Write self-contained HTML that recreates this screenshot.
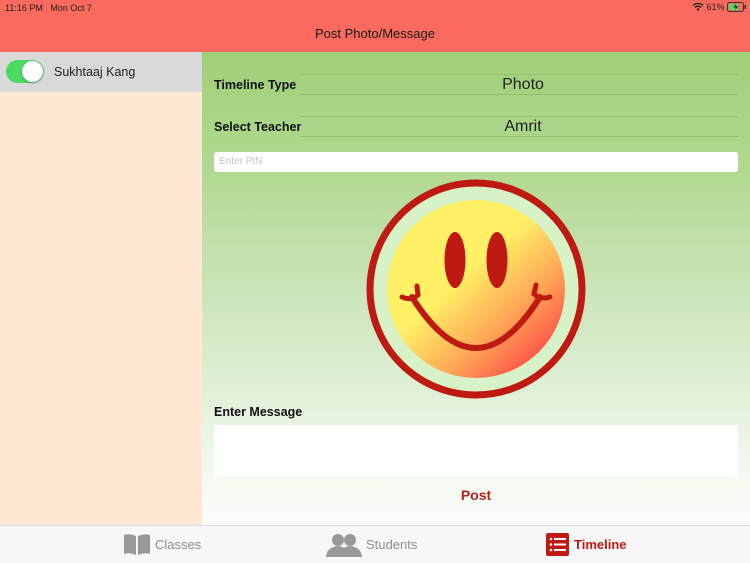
<!DOCTYPE html>
<html><head><meta charset="utf-8"><style>
*{margin:0;padding:0;box-sizing:border-box}
body{width:750px;height:563px;overflow:hidden;font-family:"Liberation Sans",sans-serif;position:relative;background:#fff}
.hdr{position:absolute;left:0;top:0;width:750px;height:52px;background:#fb6a5e}
.st{position:absolute;top:3px;font-size:9px;color:#222}
.title{position:absolute;top:26px;width:100%;text-align:center;font-size:13px;color:#1a1a1a}
.side{position:absolute;left:0;top:52px;width:202px;height:473px;background:#fee8d3}
.row{position:absolute;left:0;top:0;width:202px;height:40px;background:#d9d9d9}
.tog{position:absolute;left:6px;top:8px;width:38px;height:23px;border-radius:12px;background:#4cd964}
.tog i{position:absolute;right:1px;top:1px;width:21px;height:21px;border-radius:50%;background:#fff;box-shadow:0 1px 2px rgba(0,0,0,.3)}
.main{position:absolute;left:202px;top:52px;width:548px;height:473px;background:linear-gradient(#a0cf79 0%,#b2d991 25%,#cfe7c0 55%,#e4f2dc 75%,#fdfefc 100%)}
.lbl{position:absolute;font-size:12.5px;font-weight:bold;color:#111}
.line{position:absolute;left:98px;width:438px;height:1px;background:#93bf6f}
.val{position:absolute;left:95px;width:452px;text-align:center;font-size:16px;color:#222}
.pin{position:absolute;left:12px;top:100px;width:524px;height:20px;background:#fff;border-radius:3px;font-size:10px;color:#c4c4c8;padding:4px 5px}
.msg{position:absolute;left:12px;top:373px;width:524px;height:51px;background:#fff}
.post{position:absolute;left:0;width:548px;top:435px;text-align:center;font-size:14px;font-weight:bold;color:#b8201a}
.tab{position:absolute;left:0;top:525px;width:750px;height:38px;background:#f7f7f7;border-top:1px solid #ddd}
.t{position:absolute;top:11px;font-size:13px;color:#8e8e8e}
</style></head><body>
<div class="hdr">
<div class="st" style="left:5px">11:16 PM&nbsp;&nbsp; Mon Oct 7</div>
<div class="st" style="left:692px;top:2px">
<svg width="12" height="9" viewBox="0 0 12 9" style="vertical-align:-1px"><path d="M1 3.5a7 7 0 0 1 10 0M3 5.5a4 4 0 0 1 6 0" stroke="#222" stroke-width="1.4" fill="none"/><circle cx="6" cy="7.5" r="1.2" fill="#222"/></svg> 61%
<svg width="20" height="10" viewBox="0 0 20 10" style="vertical-align:-2px"><rect x=".5" y=".5" width="16" height="9" rx="2" fill="none" stroke="#333"/><rect x="2" y="2" width="9" height="6" fill="#4cd964"/><rect x="17.5" y="3" width="1.5" height="4" fill="#333"/><path d="M9 1.5 6.5 5.5h2.5l-1 3 3-4.5h-2.5z" fill="#222"/></svg></div>
<div class="title">Post Photo/Message</div>
</div>
<div class="side"><div class="row"><div class="tog"><i></i></div><div style="position:absolute;left:54px;top:13px;font-size:12.5px;color:#222">Sukhtaaj Kang</div></div></div>
<div class="main">
<div class="line" style="top:22px"></div>
<div class="lbl" style="left:12px;top:26px">Timeline Type</div>
<div class="val" style="top:24px">Photo</div>
<div class="line" style="top:42px"></div>
<div class="line" style="top:64px"></div>
<div class="lbl" style="left:12px;top:68px">Select Teacher</div>
<div class="val" style="top:66px">Amrit</div>
<div class="line" style="top:84px"></div>
<div class="pin">Enter PIN</div>
<svg style="position:absolute;left:164px;top:127px" width="222" height="222" viewBox="0 0 222 222">
<defs><linearGradient id="g" x1="0.25" y1="0.2" x2="0.9" y2="0.9"><stop offset="0.3" stop-color="#fff066"/><stop offset="0.65" stop-color="#ffa856"/><stop offset="1" stop-color="#ff4848"/></linearGradient></defs>
<circle cx="110" cy="110" r="106" fill="#d6f2c6" stroke="#bf1a12" stroke-width="7"/>
<circle cx="110" cy="110" r="89" fill="url(#g)"/>
<ellipse cx="89" cy="81" rx="10.5" ry="28" fill="#bf1a12"/>
<ellipse cx="131" cy="81" rx="10.5" ry="28" fill="#bf1a12"/>
<path d="M46 118Q110 220 174 118" stroke="#bf1a12" stroke-width="6" fill="none" stroke-linecap="round"/>
<path d="M36 118Q45 122 52 116L51 107M184 118Q175 121 168 115L170 106" stroke="#bf1a12" stroke-width="5" fill="none" stroke-linecap="round"/>
</svg>
<div class="lbl" style="left:12px;top:353px">Enter Message</div>
<div class="msg"></div>
<div class="post">Post</div>
</div>
<div class="tab">
<svg style="position:absolute;left:123px;top:7px" width="28" height="22" viewBox="0 0 28 22"><path d="M1 2Q7 0 13 3V22Q7 19 1 21Z M15 3Q21 0 27 2V21Q21 19 15 22Z" fill="#999"/></svg>
<div class="t" style="left:155px">Classes</div>
<svg style="position:absolute;left:326px;top:7px" width="36" height="24" viewBox="0 0 36 24"><circle cx="12" cy="7" r="6" fill="#999"/><path d="M0 24Q1 14 12 13Q22 14 23 24Z" fill="#999"/><circle cx="24" cy="7" r="6" fill="#999"/><path d="M13 24Q14 14 24 13Q35 14 36 24Z" fill="#999"/></svg>
<div class="t" style="left:366px">Students</div>
<svg style="position:absolute;left:546px;top:7px" width="23" height="23" viewBox="0 0 23 23"><rect width="23" height="23" rx="2" fill="#bf1a12"/><g fill="#fff"><circle cx="5" cy="6" r="1.3"/><circle cx="5" cy="11.5" r="1.3"/><circle cx="5" cy="17" r="1.3"/><rect x="8" y="5" width="12" height="2"/><rect x="8" y="10.5" width="12" height="2"/><rect x="8" y="16" width="12" height="2"/></g></svg>
<div class="t" style="left:574px;color:#bf1a12;font-weight:bold">Timeline</div>
</div>
</body></html>
